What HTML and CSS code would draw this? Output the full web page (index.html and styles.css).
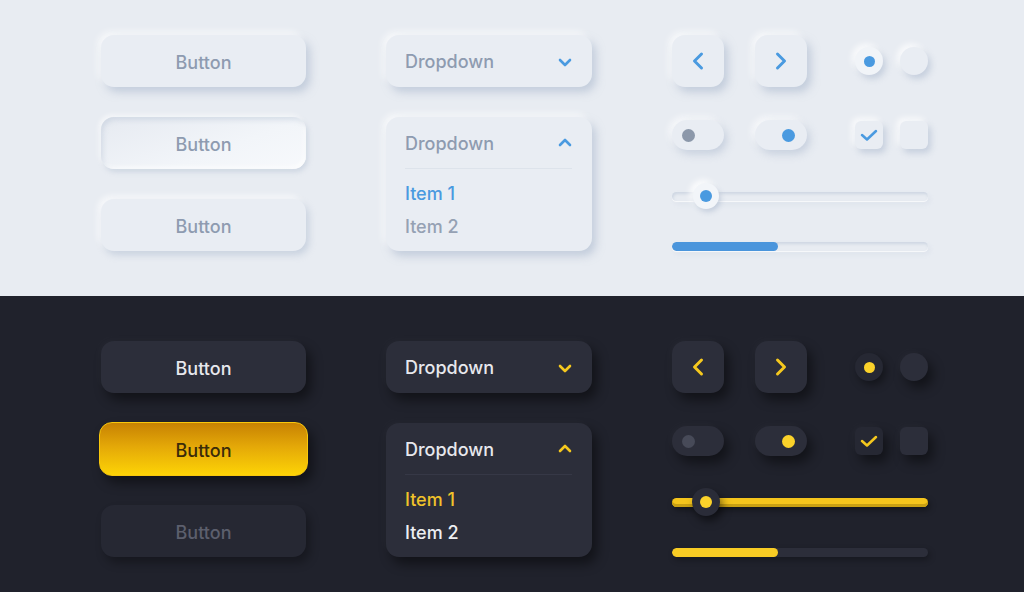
FILE: index.html
```html
<!DOCTYPE html>
<html>
<head>
<meta charset="utf-8">
<link rel="stylesheet" href="styles.css">
</head>
<body>
<section class="panel light">
  <div class="col">
    <div class="btn">Button</div>
    <div class="btn pressed">Button</div>
    <div class="btn flat">Button</div>
  </div>
  <div class="col">
    <div class="dd">
      <div class="dd-head"><span>Dropdown</span>
        <svg class="chev" width="14" height="10" viewBox="0 0 14 10"><path d="M2 3 L7 8 L12 3" fill="none" stroke-width="2.6" stroke-linecap="round" stroke-linejoin="round"/></svg>
      </div>
    </div>
    <div class="dd open">
      <div class="dd-head"><span>Dropdown</span>
        <svg class="chev" width="14" height="10" viewBox="0 0 14 10"><path d="M2 7 L7 2 L12 7" fill="none" stroke-width="2.6" stroke-linecap="round" stroke-linejoin="round"/></svg>
      </div>
      <div class="dd-list">
        <div class="item active">Item 1</div>
        <div class="item">Item 2</div>
      </div>
    </div>
  </div>
  <div class="col ctl">
    <div class="row r1">
      <div class="sq"><svg width="14" height="20" viewBox="0 0 14 20"><path d="M10.5 3 L3.5 10 L10.5 17" fill="none" stroke-width="3" stroke-linecap="round" stroke-linejoin="round"/></svg></div>
      <div class="sq"><svg width="14" height="20" viewBox="0 0 14 20"><path d="M3.5 3 L10.5 10 L3.5 17" fill="none" stroke-width="3" stroke-linecap="round" stroke-linejoin="round"/></svg></div>
      <div class="radio on"><span class="dot"></span></div>
      <div class="radio"></div>
    </div>
    <div class="row r2">
      <div class="tog"><span class="knob"></span></div>
      <div class="tog on"><span class="knob"></span></div>
      <div class="cb on"><svg width="18" height="14" viewBox="0 0 18 14"><path d="M2 7 L7 11.5 L16 3" fill="none" stroke-width="2.5" stroke-linecap="round" stroke-linejoin="round"/></svg></div>
      <div class="cb"></div>
    </div>
    <div class="slider"><div class="track"></div><div class="thumb"><span class="dot"></span></div></div>
    <div class="progress"><div class="fill" style="width:106px"></div></div>
  </div>
</section>
<section class="panel dark">
  <div class="col">
    <div class="btn">Button</div>
    <div class="btn primary">Button</div>
    <div class="btn flat">Button</div>
  </div>
  <div class="col">
    <div class="dd">
      <div class="dd-head"><span>Dropdown</span>
        <svg class="chev" width="14" height="10" viewBox="0 0 14 10"><path d="M2 3 L7 8 L12 3" fill="none" stroke-width="2.6" stroke-linecap="round" stroke-linejoin="round"/></svg>
      </div>
    </div>
    <div class="dd open">
      <div class="dd-head"><span>Dropdown</span>
        <svg class="chev" width="14" height="10" viewBox="0 0 14 10"><path d="M2 7 L7 2 L12 7" fill="none" stroke-width="2.6" stroke-linecap="round" stroke-linejoin="round"/></svg>
      </div>
      <div class="dd-list">
        <div class="item active">Item 1</div>
        <div class="item">Item 2</div>
      </div>
    </div>
  </div>
  <div class="col ctl">
    <div class="row r1">
      <div class="sq"><svg width="14" height="20" viewBox="0 0 14 20"><path d="M10.5 3 L3.5 10 L10.5 17" fill="none" stroke-width="3" stroke-linecap="round" stroke-linejoin="round"/></svg></div>
      <div class="sq"><svg width="14" height="20" viewBox="0 0 14 20"><path d="M3.5 3 L10.5 10 L3.5 17" fill="none" stroke-width="3" stroke-linecap="round" stroke-linejoin="round"/></svg></div>
      <div class="radio on"><span class="dot"></span></div>
      <div class="radio"></div>
    </div>
    <div class="row r2">
      <div class="tog"><span class="knob"></span></div>
      <div class="tog on"><span class="knob"></span></div>
      <div class="cb on"><svg width="18" height="14" viewBox="0 0 18 14"><path d="M2 7 L7 11.5 L16 3" fill="none" stroke-width="2.5" stroke-linecap="round" stroke-linejoin="round"/></svg></div>
      <div class="cb"></div>
    </div>
    <div class="slider full"><div class="track"></div><div class="thumb"><span class="dot"></span></div></div>
    <div class="progress"><div class="fill" style="width:106px"></div></div>
  </div>
</section>
</body>
</html>
```
FILE: styles.css
```css
* { box-sizing: border-box; }
html, body { margin: 0; padding: 0; }
body {
  width: 1024px;
  height: 592px;
  overflow: hidden;
  font-family: Inter, "Noto Sans", sans-serif;
  font-weight: 500;
}
.panel {
  height: 296px;
  padding: 35px 0 0 101px;
  display: grid;
  grid-template-columns: 205px 206px 256px;
  column-gap: 80px;
  align-items: start;
}
.dark.panel { padding-top: 45px; }
.col { display: flex; flex-direction: column; gap: 30px; }

/* ---------- light ---------- */
.light { background: #e8ecf2; color: #8e9bb0; }
.light .btn {
  background: #e9edf3;
  box-shadow: 4px 5px 9px rgba(158, 174, 198, 0.5), -3px -3px 7px rgba(255, 255, 255, 0.75);
}
.light .btn.pressed {
  background: linear-gradient(160deg, #e6eaf1 0%, #f2f5f9 60%, #f7f9fc 100%);
  box-shadow: inset 2px 3px 5px rgba(158, 174, 198, 0.3), inset -2px -2px 4px rgba(255,255,255,0.8), 2px 3px 5px rgba(158,174,198,0.35), -2px -2px 5px rgba(255,255,255,0.7);
}
.light .btn.flat {
  box-shadow: 3px 4px 7px rgba(158, 174, 198, 0.42), -3px -3px 6px rgba(255, 255, 255, 0.7);
}

.btn {
  height: 52px;
  border-radius: 13px;
  display: flex;
  align-items: center;
  justify-content: center;
  font-size: 18px;
  padding-top: 2px;
}

.dd {
  border-radius: 13px;
  padding: 0 20px 0 19px;
}
.dd-head {
  height: 52px;
  display: flex;
  align-items: center;
  justify-content: space-between;
  font-size: 18px;
  padding-top: 1px;
}
.dd.open .dd-head { height: 51px; }
.dd-list { padding: 8px 0 8px; border-top: 1px solid; }
.item { height: 33px; display: flex; align-items: center; font-size: 18px; }

.light .dd {
  background: #e9edf3;
  box-shadow: 4px 5px 9px rgba(158, 174, 198, 0.5), -3px -3px 7px rgba(255, 255, 255, 0.75);
}
.light .dd-list { border-color: #dde3eb; }
.light .chev path, .light .sq path, .light .cb path { stroke: #4a9ae0; }
.light .item { color: #95a1b3; }
.light .item.active { color: #4a9ae0; }

/* controls */
.ctl { gap: 0; }
.row { display: flex; align-items: center; }
.r1 { height: 52px; }
.r2 { height: 30px; margin-top: 33px; }
.sq { width: 52px; height: 52px; border-radius: 13px; display: flex; align-items: center; justify-content: center; }
.sq + .sq { margin-left: 31px; }
.radio { width: 28px; height: 28px; border-radius: 50%; display: flex; align-items: center; justify-content: center; }
.sq + .radio { margin-left: 48px; }
.radio + .radio { margin-left: 17px; }
.radio .dot { width: 11px; height: 11px; border-radius: 50%; }

.tog { width: 52px; height: 30px; border-radius: 15px; display: flex; align-items: center; padding-left: 10px; }
.tog.on { justify-content: flex-end; padding: 0 12px 0 0; }
.tog + .tog { margin-left: 31px; }
.knob { width: 13px; height: 13px; border-radius: 50%; }
.cb { width: 28px; height: 28px; border-radius: 6px; display: flex; align-items: center; justify-content: center; }
.tog + .cb { margin-left: 48px; }
.cb + .cb { margin-left: 17px; }

.slider { position: relative; height: 26px; margin-top: 33px; display: flex; align-items: center; }
.track { width: 256px; height: 9px; border-radius: 5px; }
.thumb { position: absolute; left: 21px; top: 0; width: 26px; height: 26px; border-radius: 50%; display: flex; align-items: center; justify-content: center; }
.thumb .dot { width: 12px; height: 12px; border-radius: 50%; }
.progress { width: 256px; height: 9px; border-radius: 5px; margin-top: 33px; overflow: hidden; }
.fill { height: 100%; border-radius: 5px; }

.light .sq {
  background: #e9edf3;
  box-shadow: 4px 5px 9px rgba(158, 174, 198, 0.5), -3px -3px 7px rgba(255, 255, 255, 0.75);
}
.light .radio, .light .cb { background: #e9edf3; box-shadow: 3px 4px 6px rgba(158, 174, 198, 0.45), -3px -3px 6px rgba(255, 255, 255, 0.8); }
.light .radio.on { background: #f1f4f8; }
.light .radio .dot { background: #4a9ae0; }
.light .tog {
  background: #e9edf3;
  box-shadow: 3px 4px 8px rgba(158, 174, 198, 0.45), -3px -3px 7px rgba(255, 255, 255, 0.75);
}
.light .tog .knob { background: #8c98aa; }
.light .tog.on .knob { background: #4a9ae0; }
.light .track, .light .progress {
  background: #e8ecf2;
  box-shadow: inset 1px 2px 3px rgba(158, 174, 198, 0.35), 0 1px 1px rgba(255,255,255,0.8), 2px 3px 5px rgba(158,174,198,0.15);
}
.light .thumb { background: #f2f5f9; box-shadow: 2px 3px 5px rgba(158, 174, 198, 0.45), -3px -3px 6px rgba(255, 255, 255, 0.9); }
.light .thumb .dot { background: #4a9ae0; }
.light .fill { background: #4a95dc; }

/* ---------- dark ---------- */
.dark { background: #20222c; color: #e7e8ed; }
.dark .btn, .dark .dd, .dark .sq, .dark .tog, .dark .radio, .dark .cb {
  background: #2c2e3a;
  box-shadow: 5px 7px 12px rgba(0, 0, 0, 0.45), -3px -3px 8px rgba(255, 255, 255, 0.025);
}
.dark .btn.primary {
  background: linear-gradient(180deg, #c78203 0%, #e4a808 45%, #fdd306 100%);
  border: 1.5px solid #f8c70c;
  color: #3a2b0a;
  margin: -1px -2px;
  height: 54px;
  box-shadow: 5px 7px 12px rgba(0, 0, 0, 0.45);
}
.dark .btn.flat { background: #262833; color: #5c5f6d; box-shadow: 4px 6px 10px rgba(0,0,0,0.3); }
.dark .dd-list { border-color: #363846; }
.dark .chev path, .dark .sq path, .dark .cb path { stroke: #f5c81e; }
.dark .item { color: #eceef2; }
.dark .item.active { color: #f0c22a; }
.dark .radio.on { background: #262833; box-shadow: 3px 4px 8px rgba(0,0,0,0.4); }
.dark .radio .dot { background: #fbd22a; }
.dark .tog .knob { background: #474a58; }
.dark .tog.on .knob { background: #fbd22a; }
.dark .cb.on { background: #262833; }
.dark .track { background: #f5c51c; box-shadow: inset 0 -3px 0 #c9a012, 2px 3px 6px rgba(0,0,0,0.4); }
.dark .thumb { background: #2a2c38; box-shadow: 3px 5px 8px rgba(0,0,0,0.5); width: 28px; height: 28px; left: 20px; top: -1px; }
.dark .thumb .dot { background: #fbd22a; }
.dark .progress { background: #2c2e3a; box-shadow: 2px 3px 6px rgba(0,0,0,0.3); }
.dark .fill { background: #f8cc24; }
```
